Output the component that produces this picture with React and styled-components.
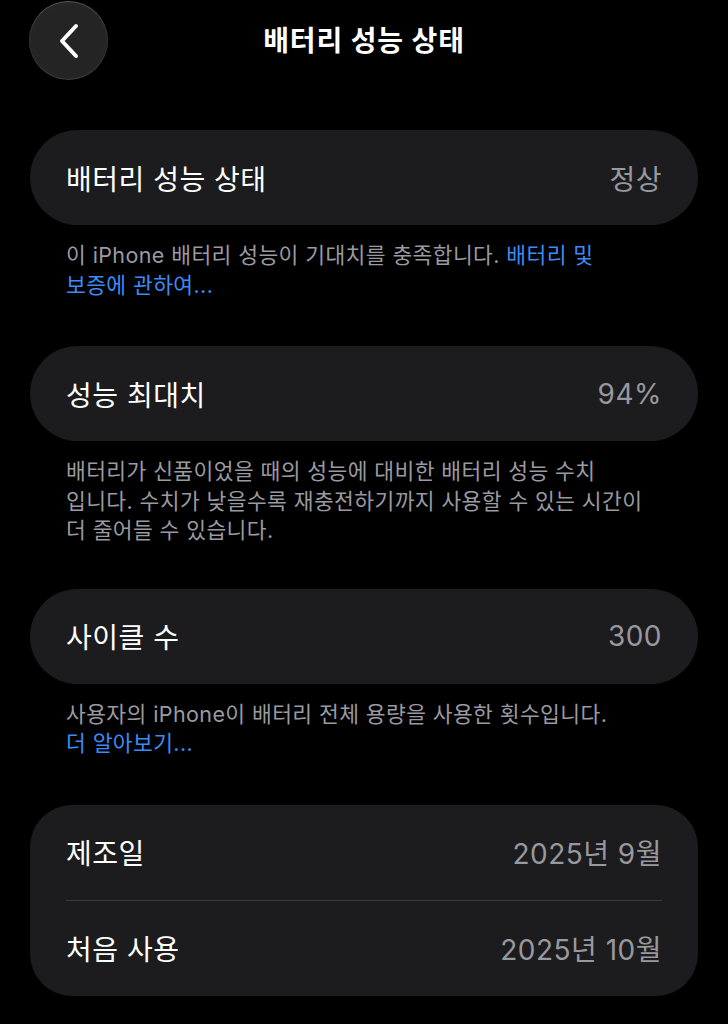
import styled, { createGlobalStyle } from "styled-components";

const GlobalStyle = createGlobalStyle`
  html, body {
    margin: 0;
    padding: 0;
    background: #000;
  }
  body {
    font-family: Inter, "Noto Sans CJK KR", sans-serif;
    -webkit-font-smoothing: antialiased;
  }
`;

const Page = styled.div`
  width: 728px;
  min-height: 1024px;
  background: #000;
  color: #fff;
  box-sizing: border-box;
`;

const Header = styled.header`
  position: relative;
  height: 80px;
  display: flex;
  align-items: center;
  justify-content: center;
`;

const BackButton = styled.button`
  position: absolute;
  left: 29px;
  top: 1px;
  width: 79px;
  height: 79px;
  border-radius: 50%;
  border: none;
  padding: 0;
  background: radial-gradient(circle at 50% 50%, #242424 60%, #2a2a2a 100%);
  box-shadow: inset 0 1px 1px rgba(255, 255, 255, 0.22),
    inset 0 -1px 1px rgba(255, 255, 255, 0.12);
  display: flex;
  align-items: center;
  justify-content: center;
  cursor: pointer;
`;

const Title = styled.h1`
  margin: 0 0 3px;
  font-size: 28px;
  font-weight: 700;
  letter-spacing: 0.9px;
`;

const Content = styled.main`
  padding: 50px 30px 0;
  display: flex;
  flex-direction: column;
`;

const Section = styled.section`
  margin-bottom: ${(p) => p.$gap}px;
`;

const Card = styled.div`
  background: #1c1c1e;
  border-radius: ${(p) => (p.$grouped ? "42px" : "48px")};
  padding: 0 36px;
`;

const Row = styled.div`
  height: ${(p) => (p.$divider ? 96.5 : 95)}px;
  display: flex;
  align-items: center;
  justify-content: space-between;
  font-size: 28px;
  letter-spacing: 0.5px;
  border-top: ${(p) => (p.$divider ? "1.5px solid #38383a" : "none")};
  box-sizing: border-box;
`;

const Label = styled.span`
  color: #fff;
`;

const Value = styled.span`
  color: #98989e;
`;

const Footer = styled.p`
  margin: 16px 36px 0;
  font-size: 21.5px;
  line-height: 29.5px;
  letter-spacing: 0.4px;
  color: #9a9aa0;
`;

const Link = styled.a`
  color: #3b8cf6;
  text-decoration: none;
`;

function Chevron() {
  return (
    <svg width="24" height="36" viewBox="0 0 24 36" fill="none">
      <path
        d="M19 3 L5 18 L19 33"
        stroke="#fff"
        strokeWidth="4"
        strokeLinecap="round"
        strokeLinejoin="round"
      />
    </svg>
  );
}

export default function App() {
  return (
    <Page>
      <GlobalStyle />
      <Header>
        <BackButton aria-label="뒤로">
          <Chevron />
        </BackButton>
        <Title>배터리 성능 상태</Title>
      </Header>
      <Content>
        <Section $gap={46}>
          <Card>
            <Row>
              <Label>배터리 성능 상태</Label>
              <Value>정상</Value>
            </Row>
          </Card>
          <Footer>
            이 iPhone 배터리 성능이 기대치를 충족합니다. <Link>배터리 및</Link>
            <br />
            <Link>보증에 관하여...</Link>
          </Footer>
        </Section>
        <Section $gap={43}>
          <Card>
            <Row>
              <Label>성능 최대치</Label>
              <Value>94%</Value>
            </Row>
          </Card>
          <Footer>
            배터리가 신품이었을 때의 성능에 대비한 배터리 성능 수치
            <br />
            입니다. 수치가 낮을수록 재충전하기까지 사용할 수 있는 시간이
            <br />더 줄어들 수 있습니다.
          </Footer>
        </Section>
        <Section $gap={46}>
          <Card>
            <Row>
              <Label>사이클 수</Label>
              <Value>300</Value>
            </Row>
          </Card>
          <Footer>
            사용자의 iPhone이 배터리 전체 용량을 사용한 횟수입니다.
            <br />
            <Link>더 알아보기...</Link>
          </Footer>
        </Section>
        <Section $gap={0}>
          <Card $grouped>
            <Row>
              <Label>제조일</Label>
              <Value>2025년 9월</Value>
            </Row>
            <Row $divider>
              <Label>처음 사용</Label>
              <Value>2025년 10월</Value>
            </Row>
          </Card>
        </Section>
      </Content>
    </Page>
  );
}
